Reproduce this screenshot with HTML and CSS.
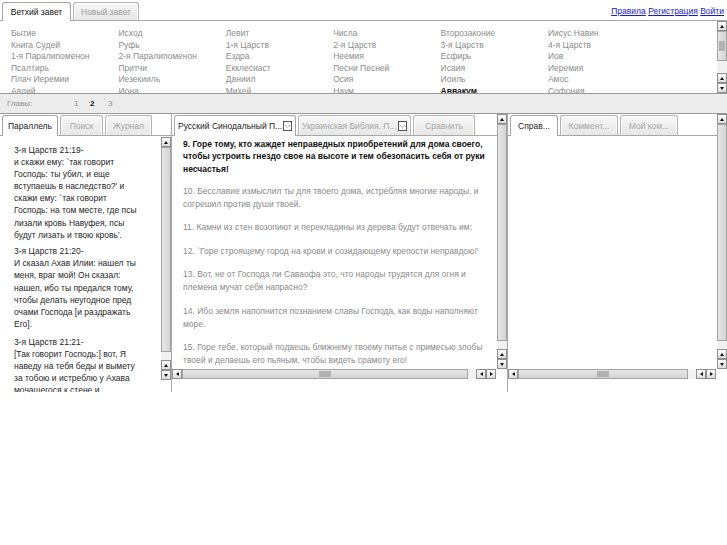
FILE: index.html
```html
<!DOCTYPE html>
<html lang="ru">
<head>
<meta charset="utf-8">
<title>Библия</title>
<link rel="stylesheet" href="styles.css">
</head>
<body>
<header class="top">
  <nav class="ttabs">
    <div class="ttab active">Ветхий завет</div>
    <div class="ttab">Новый завет</div>
  </nav>
  <div class="links"><a href="#">Правила</a> <a href="#">Регистрация</a> <a href="#">Войти</a></div>
</header>

<section class="books">
  <div class="booklist">
    <span>Бытие</span><span>Исход</span><span>Левит</span><span>Числа</span><span>Второзаконие</span><span>Иисус Навин</span>
    <span>Книга Судей</span><span>Руфь</span><span>1-я Царств</span><span>2-я Царств</span><span>3-я Царств</span><span>4-я Царств</span>
    <span>1-я Паралипоменон</span><span>2-я Паралипоменон</span><span>Ездра</span><span>Неемия</span><span>Есфирь</span><span>Иов</span>
    <span>Псалтирь</span><span>Притчи</span><span>Екклесиаст</span><span>Песни Песней</span><span>Исаия</span><span>Иеремия</span>
    <span>Плач Иеремии</span><span>Иезекииль</span><span>Даниил</span><span>Осия</span><span>Иоиль</span><span>Амос</span>
    <span>Авдий</span><span>Иона</span><span>Михей</span><span>Наум</span><span class="cur">Аввакум</span><span>Софония</span>
    <span>Аггей</span><span>Захария</span><span>Малахия</span>
  </div>
  <div class="vsb vsb-books">
    <div class="sbtn up"></div>
    <div class="thumb grip"></div>
    <div class="track"></div>
    <div class="sbtn up"></div>
    <div class="sbtn down"></div>
  </div>
</section>

<div class="chapters">
  <span class="lbl">Главы:</span><span class="ch">1</span><span class="ch cur">2</span><span class="ch">3</span>
</div>

<main class="panels">
  <section class="panel p-left">
    <div class="tabs">
      <div class="tab active w-par">Параллель</div>
      <div class="tab w-search">Поиск</div>
      <div class="tab w-log">Журнал</div>
    </div>
    <div class="pbody">
      <div class="ptext">
        <p><span class="ref">3-я Царств 21:19-</span>и скажи ему: `так говорит Господь: ты убил, и еще вступаешь в наследство?' и скажи ему: `так говорит Господь: на том месте, где псы лизали кровь Навуфея, псы будут лизать и твою кровь'.</p>
        <p><span class="ref">3-я Царств 21:20-</span>И сказал Ахав Илии: нашел ты меня, враг мой! Он сказал: нашел, ибо ты предался тому, чтобы делать неугодное пред очами Господа [и раздражать Его].</p>
        <p><span class="ref">3-я Царств 21:21-</span>[Так говорит Господь:] вот, Я наведу на тебя беды и вымету за тобою и истреблю у Ахава мочащегося к стене и заключенного и оставшегося в Израиле;</p>
      </div>
      <div class="vsb vsb-left">
        <div class="sbtn up"></div>
        <div class="thumb"></div>
        <div class="track"></div>
        <div class="sbtn up"></div>
        <div class="sbtn down"></div>
      </div>
    </div>
  </section>

  <section class="panel p-mid">
    <div class="pmain">
      <div class="tabs">
        <div class="tab active drop w-rst">Русский Синодальный П...<span class="dd"><svg width="9" height="10" viewBox="0 0 9 10"><rect x="0.5" y="0.5" width="8" height="9" fill="#fff" stroke="#555"/><path d="M2 4 L4.5 6.5 L7 4" fill="none" stroke="#aaa" stroke-width="1"/></svg></span></div>
        <div class="tab drop w-ukr">Украинская Библия. П...<span class="dd"><svg width="9" height="10" viewBox="0 0 9 10"><rect x="0.5" y="0.5" width="8" height="9" fill="#fff" stroke="#555"/><path d="M2 4 L4.5 6.5 L7 4" fill="none" stroke="#aaa" stroke-width="1"/></svg></span></div>
        <div class="tab w-cmp">Сравнить</div>
      </div>
      <div class="verses">
        <p class="sel">9. Горе тому, кто жаждет неправедных приобретений для дома своего, чтобы устроить гнездо свое на высоте и тем обезопасить себя от руки несчастья!</p>
        <p>10. Бесславие измыслил ты для твоего дома, истребляя многие народы, и согрешил против души твоей.</p>
        <p>11. Камни из стен возопиют и перекладины из дерева будут отвечать им:</p>
        <p>12. `Горе строящему город на крови и созидающему крепости неправдою!'</p>
        <p>13. Вот, не от Господа ли Саваофа это, что народы трудятся для огня и племена мучат себя напрасно?</p>
        <p>14. Ибо земля наполнится познанием славы Господа, как воды наполняют море.</p>
        <p>15. Горе тебе, который подаешь ближнему твоему питье с примесью злобы твоей и делаешь его пьяным, чтобы видеть срамоту его!</p>
      </div>
      <div class="hsb">
        <div class="sbtn left"></div>
        <div class="thumb hgrip"></div>
        <div class="track"></div>
        <div class="sbtn left"></div>
        <div class="sbtn right"></div>
      </div>
    </div>
    <div class="vsb vsb-full">
      <div class="sbtn up"></div>
      <div class="thumb"></div>
      <div class="track"></div>
      <div class="sbtn up"></div>
      <div class="sbtn down"></div>
    </div>
  </section>

  <section class="panel p-right">
    <div class="pmain">
      <div class="tabs">
        <div class="tab active w-spr">Справ...</div>
        <div class="tab w-kom">Коммент...</div>
        <div class="tab w-my">Мой ком...</div>
      </div>
      <div class="empty"></div>
      <div class="hsb">
        <div class="sbtn left"></div>
        <div class="thumb hgrip"></div>
        <div class="track"></div>
        <div class="sbtn left"></div>
        <div class="sbtn right"></div>
      </div>
    </div>
    <div class="vsb vsb-full">
      <div class="sbtn up"></div>
      <div class="thumb"></div>
      <div class="track"></div>
      <div class="sbtn up"></div>
      <div class="sbtn down"></div>
    </div>
  </section>
</main>
</body>
</html>
```

FILE: styles.css
```css
* { box-sizing: border-box; margin: 0; padding: 0; }

body {
  width: 727px;
  height: 545px;
  overflow: hidden;
  background: #fff;
  color: #222;
  font-family: "Liberation Sans", Arial, sans-serif;
  font-size: 8.5px;
}

/* ---------- header ---------- */
.top {
  height: 21px;
  display: flex;
  justify-content: space-between;
  align-items: flex-end;
  border-bottom: 1px solid #a9a9a9;
  padding-left: 2px;
}
.ttabs { display: flex; gap: 2px; }
.ttab {
  width: 66px;
  height: 18px;
  border: 1px solid #b3b3b3;
  border-bottom: none;
  border-radius: 3px 3px 0 0;
  background: linear-gradient(#f6f6f6, #e6e6e6);
  box-shadow: inset 1px 1px 0 #fff, inset -1px 0 0 #fff;
  color: #9a9a9a;
  font-size: 8.5px;
  display: flex;
  align-items: center;
  justify-content: center;
}
.ttab.active {
  width: 69px;
  height: 19px;
  margin-bottom: -1px;
  background: #fff;
  box-shadow: none;
  border-color: #a5a5a5;
  color: #111;
}
.links {
  align-self: flex-start;
  padding: 6px 3px 0 0;
  font-size: 8.5px;
}
.links a { color: #1a1acc; text-decoration: underline; }

/* ---------- books ---------- */
.books {
  display: flex;
  height: 73px;
  border-bottom: 1px solid #9a9a9a;
}
.booklist {
  flex: 1;
  overflow: hidden;
  padding: 7px 0 0 11px;
  display: grid;
  grid-template-columns: repeat(6, 107.4px);
  grid-auto-rows: 11.5px;
  align-content: start;
  line-height: 11.5px;
  color: #8c8c8c;
  white-space: nowrap;
}
.booklist .cur { color: #111; font-weight: bold; }

/* ---------- chapters ---------- */
.chapters {
  height: 19px;
  background: #ececec;
  display: flex;
  align-items: center;
  padding: 0 0 0 7px;
  color: #8c8c8c;
  font-size: 8px;
}
.chapters .lbl { width: 67px; }
.chapters .ch { width: 16px; }
.chapters .ch.cur { width: 18px; color: #111; font-weight: bold; }

/* ---------- scrollbars ---------- */
.vsb { width: 10px; flex: none; display: flex; flex-direction: column; }
.hsb { height: 10px; flex: none; display: flex; margin-right: 1px; }
.sbtn {
  flex: none;
  width: 10px;
  height: 10px;
  border: 1px solid #8f8f8f;
  background: linear-gradient(#ffffff, #dcdcdc);
  display: flex;
  align-items: center;
  justify-content: center;
}
.sbtn::after { content: ""; width: 0; height: 0; }
.sbtn.up::after { border-left: 2.5px solid transparent; border-right: 2.5px solid transparent; border-bottom: 3px solid #111; }
.sbtn.down::after { border-left: 2.5px solid transparent; border-right: 2.5px solid transparent; border-top: 3px solid #111; }
.sbtn.left::after { border-top: 2.5px solid transparent; border-bottom: 2.5px solid transparent; border-right: 3px solid #111; }
.sbtn.right::after { border-top: 2.5px solid transparent; border-bottom: 2.5px solid transparent; border-left: 3px solid #111; }
.thumb {
  flex: 1;
  border: 1px solid #a3a3a3;
  background: linear-gradient(to right, #e6e6e6, #d3d3d3);
  display: flex;
  align-items: center;
  justify-content: center;
}
.hsb .thumb { background: linear-gradient(#e6e6e6, #d3d3d3); }
.track { flex: none; background: #f1f1f1; }
.vsb .track { height: 8px; }
.hsb .track { width: 8px; }

.grip::after {
  content: "";
  width: 6px;
  height: 10px;
  background-image: radial-gradient(circle, #b0b0b0 0.7px, transparent 0.9px);
  background-size: 2px 2px;
}
.hgrip::after {
  content: "";
  width: 12px;
  height: 6px;
  background-image: radial-gradient(circle, #b0b0b0 0.7px, transparent 0.9px);
  background-size: 2px 2px;
}

.vsb-books { height: 72px; }
.vsb-books .thumb { flex: none; height: 30px; }
.vsb-books .track { flex: 1; height: auto; }

.vsb-left { margin-top: 1px; height: 243px; }
.vsb-full { height: 255px; }

/* ---------- panels ---------- */
.panels {
  display: flex;
  height: 279px;
  border-top: 1px solid #9a9a9a;
}
.panel { display: flex; }
.p-left { width: 172px; flex-direction: column; border-right: 1px solid #a8a8a8; }
.p-mid { width: 336px; border-right: 1px solid #a8a8a8; }
.p-right { flex: 1; }
.pmain { flex: 1; min-width: 0; display: flex; flex-direction: column; }

.tabs {
  height: 22px;
  flex: none;
  display: flex;
  align-items: flex-end;
  gap: 2px;
  padding-left: 2px;
  border-bottom: 1px solid #a8a8a8;
}
.tab {
  height: 20px;
  border: 1px solid #b3b3b3;
  border-bottom: none;
  border-radius: 3px 3px 0 0;
  background: linear-gradient(#f7f7f7, #e7e7e7);
  box-shadow: inset 1px 1px 0 #fff, inset -1px 0 0 #fff;
  color: #a6a6a6;
  display: flex;
  align-items: center;
  justify-content: center;
  white-space: nowrap;
  overflow: hidden;
}
.tab.active {
  height: 21px;
  margin-bottom: -1px;
  background: #fff;
  box-shadow: none;
  border-color: #a5a5a5;
  color: #1a1a1a;
}
.tab.drop { justify-content: space-between; padding: 0 3px 0 3px; }
.dd { display: flex; }
.dd svg { display: block; }

.w-par { width: 56px; }
.w-search { width: 43px; }
.w-log { width: 47px; }
.w-rst { width: 122px; }
.w-ukr { width: 113px; }
.w-cmp { width: 62px; }
.w-spr { width: 48px; }
.w-kom { width: 58px; }
.w-my { width: 58px; }

/* left panel body */
.pbody { flex: 1; display: flex; min-height: 0; }
.ptext {
  flex: 1;
  overflow: hidden;
  padding: 8px 21px 0 14px;
  line-height: 12.1px;
  color: #262626;
}
.ptext p { margin-bottom: 6px; }
.ptext p:first-child { margin-bottom: 4.5px; }
.ptext .ref { display: block; }

/* middle verses */
.verses {
  height: 233px;
  flex: none;
  overflow: hidden;
  padding: 1.5px 9px 0 11px;
  line-height: 12.9px;
  color: #8a8a8a;
}
.verses p { margin-bottom: 10.6px; }
.verses p.sel { color: #111; font-weight: bold; margin-bottom: 8.6px; }

.empty { height: 233px; flex: none; }
```
